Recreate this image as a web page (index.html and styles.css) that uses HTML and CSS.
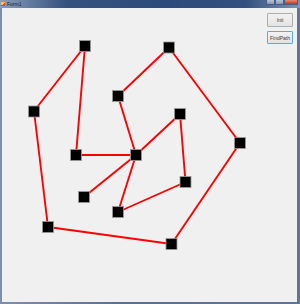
FILE: index.html
```html
<!DOCTYPE html>
<html lang="en">
<head>
  <meta charset="UTF-8">
  <title>Form1</title>
  <link rel="stylesheet" href="styles.css">
</head>
<body>
  <div class="window">
    <div class="titlebar">
      <span class="app-icon"></span>
      <span class="title">Form1</span>
      <div class="caption-buttons">
        <span class="cb"></span>
        <span class="cb"></span>
        <span class="cb close"></span>
      </div>
    </div>
    <div class="client">
      <svg class="graph" width="265" height="294" viewBox="2 8 265 294">
        <g class="edges">
          <line x1="85" y1="46" x2="34" y2="111"/>
          <line x1="85" y1="46" x2="76" y2="155"/>
          <line x1="34" y1="111" x2="48" y2="227"/>
          <line x1="76" y1="155" x2="136" y2="155"/>
          <line x1="48" y1="227" x2="171.5" y2="244"/>
          <line x1="171.5" y1="244" x2="240" y2="143"/>
          <line x1="240" y1="143" x2="169" y2="47.5"/>
          <line x1="169" y1="47.5" x2="118" y2="96"/>
          <line x1="118" y1="96" x2="136" y2="155"/>
          <line x1="136" y1="155" x2="180" y2="114"/>
          <line x1="180" y1="114" x2="185.5" y2="182"/>
          <line x1="185.5" y1="182" x2="118" y2="212"/>
          <line x1="118" y1="212" x2="136" y2="155"/>
          <line x1="136" y1="155" x2="84" y2="197"/>
        </g>
        <g class="nodes">
          <rect x="79.5" y="40.5" width="11" height="11"/>
          <rect x="163.5" y="42" width="11" height="11"/>
          <rect x="28.5" y="106" width="11" height="11"/>
          <rect x="112.5" y="90.5" width="11" height="11"/>
          <rect x="174.5" y="108.5" width="11" height="11"/>
          <rect x="234.5" y="137.5" width="11" height="11"/>
          <rect x="70.5" y="149.5" width="11" height="11"/>
          <rect x="130.5" y="149.5" width="11" height="11"/>
          <rect x="180" y="176.5" width="11" height="11"/>
          <rect x="78.5" y="191.5" width="11" height="11"/>
          <rect x="112.5" y="206.5" width="11" height="11"/>
          <rect x="42.5" y="221.5" width="11" height="11"/>
          <rect x="166" y="238.5" width="11" height="11"/>
        </g>
      </svg>
      <div class="actions">
        <button class="btn">Init</button>
        <button class="btn focused">FindPath</button>
      </div>
    </div>
  </div>
</body>
</html>
```

FILE: styles.css
```css
body {
  margin: 0;
  font-family: "Liberation Sans", Arial, sans-serif;
}

.window {
  width: 300px;
  height: 304px;
  box-sizing: border-box;
  padding: 0 3px 2px 2px;
  background: linear-gradient(90deg, #7d8fae 0%, #5a6f98 40%, #60749b 100%);
  display: flex;
  flex-direction: column;
}

.titlebar {
  height: 8px;
  margin: 0 -3px 0 -2px;
  padding: 0 2px 0 1px;
  display: flex;
  align-items: center;
  gap: 2px;
  background: linear-gradient(90deg, #8a9cba 0%, #35527f 22%, #2c4a7b 55%, #33517f 82%, #7f93b4 100%);
}

.app-icon {
  width: 4px;
  height: 4px;
  background: linear-gradient(135deg, #f6c63e 50%, #d94b2b 50%);
}

.title {
  font-size: 5px;
  color: #1b2333;
  line-height: 8px;
}

.caption-buttons {
  margin-left: auto;
  display: flex;
  align-self: flex-start;
}

.cb {
  width: 9px;
  height: 5px;
  background: linear-gradient(#b7c3d6, #8797b4);
  border: 1px solid #4a5d80;
  border-top: 0;
  box-sizing: border-box;
}

.cb.close {
  width: 14px;
  background: linear-gradient(#e58a78, #c8351c);
}

.client {
  flex: 1;
  background: #f0f0f0;
  display: flex;
}

.graph {
  display: block;
}

.edges line {
  stroke: #ff0000;
  stroke-width: 1.9;
}

.nodes rect {
  fill: #000000;
  stroke: #9a9a9a;
  stroke-width: 0.8;
}

.actions {
  padding-top: 5px;
  display: flex;
  flex-direction: column;
  gap: 4px;
}

.btn {
  width: 26px;
  height: 14px;
  padding: 0;
  font-family: inherit;
  font-size: 5px;
  color: #3a3a3a;
  background: linear-gradient(#f2f2f2, #e3e3e3);
  border: 1px solid #adadad;
  border-radius: 1px;
}

.btn.focused {
  height: 13px;
  border-color: #5cabdc;
}
```
